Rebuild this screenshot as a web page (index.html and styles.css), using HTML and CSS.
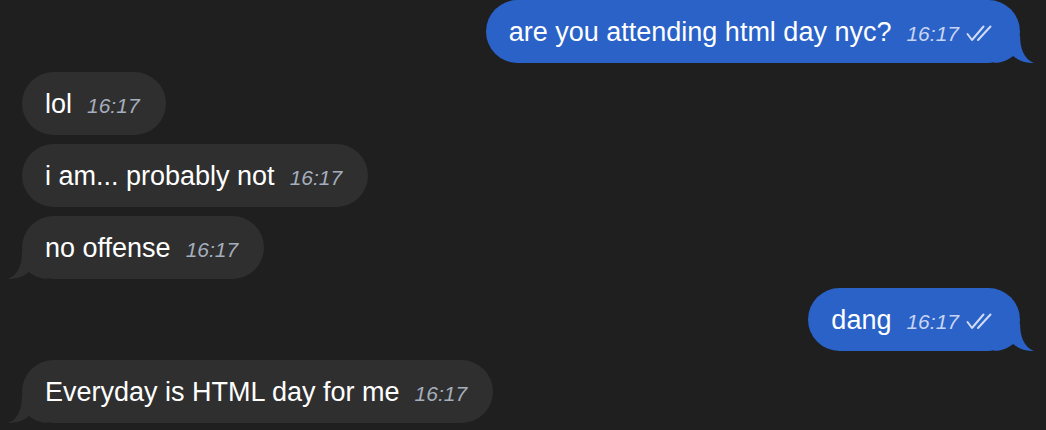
FILE: index.html
```html
<!DOCTYPE html>
<html lang="en">
<head>
    <meta charset="UTF-8">
    <meta name="viewport" content="width=device-width, initial-scale=1.0">
    <title>Chat</title>
    <link rel="stylesheet" href="styles.css">
</head>
<body>
    <div class="chat">
        <div class="msg out tail">
            <span class="text">are you attending html day nyc?</span>
            <span class="time">16:17</span>
            <svg class="ticks" width="29" height="17" viewBox="0 0 29 17"><path d="M1.5 9 L6 15 L17.5 1.5 M12 15 L24.5 1.5" fill="none" stroke="currentColor" stroke-width="2" stroke-linecap="round" stroke-linejoin="round"/></svg>
            <svg class="tail-shape" width="40" height="28" viewBox="0 0 40 28"><path d="M26 0 C26 14 30 24 40 28 C32 28 25 26 19 21 C14 25 8 28 0 28 Z"/></svg>
        </div>

        <div class="msg in">
            <span class="text">lol</span>
            <span class="time">16:17</span>
        </div>
        <div class="msg in">
            <span class="text">i am... probably not</span>
            <span class="time">16:17</span>
        </div>
        <div class="msg in tail">
            <span class="text">no offense</span>
            <span class="time">16:17</span>
            <svg class="tail-shape" width="40" height="28" viewBox="0 0 40 28"><path d="M14 0 C14 14 10 24 0 28 C8 28 15 26 21 21 C26 25 32 28 40 28 Z"/></svg>
        </div>

        <div class="msg out tail">
            <span class="text">dang</span>
            <span class="time">16:17</span>
            <svg class="ticks" width="29" height="17" viewBox="0 0 29 17"><path d="M1.5 9 L6 15 L17.5 1.5 M12 15 L24.5 1.5" fill="none" stroke="currentColor" stroke-width="2" stroke-linecap="round" stroke-linejoin="round"/></svg>
            <svg class="tail-shape" width="40" height="28" viewBox="0 0 40 28"><path d="M26 0 C26 14 30 24 40 28 C32 28 25 26 19 21 C14 25 8 28 0 28 Z"/></svg>
        </div>

        <div class="msg in tail">
            <span class="text">Everyday is HTML day for me</span>
            <span class="time">16:17</span>
            <svg class="tail-shape" width="40" height="28" viewBox="0 0 40 28"><path d="M14 0 C14 14 10 24 0 28 C8 28 15 26 21 21 C26 25 32 28 40 28 Z"/></svg>
        </div>
    </div>
</body>
</html>
```

FILE: styles.css
```css
body {
    margin: 0;
    background-color: #1f1f1f;
    color: #fff;
    font-family: 'Liberation Sans', Arial, sans-serif;
}
.chat {
    display: flex;
    flex-direction: column;
    gap: 9px;
    padding: 0 26px 0 22px;
}
.msg {
    position: relative;
    display: flex;
    align-items: baseline;
    gap: 15px;
    height: 63px;
    box-sizing: border-box;
    padding: 16px 26px 14px 23px;
    border-radius: 32px;
    font-size: 27px;
    line-height: 33px;
}
.msg.in {
    align-self: flex-start;
    background: #2f2f2f;
}
.msg.out {
    align-self: flex-end;
    background: #2a62c8;
    padding-right: 25px;
}
.text {
    position: relative;
    z-index: 1;
}
.time {
    font-size: 21px;
    line-height: 20px;
    font-style: italic;
    color: #a5aebd;
}
.out .time {
    color: #c8d5f1;
}
.ticks {
    color: #d0dcf4;
    margin-left: -8px;
    align-self: center;
    margin-top: 2px;
}
.tail-shape {
    position: absolute;
    bottom: 0;
}
.out .tail-shape {
    right: -14px;
    fill: #2a62c8;
}
.in .tail-shape {
    left: -14px;
    fill: #2f2f2f;
}
```
